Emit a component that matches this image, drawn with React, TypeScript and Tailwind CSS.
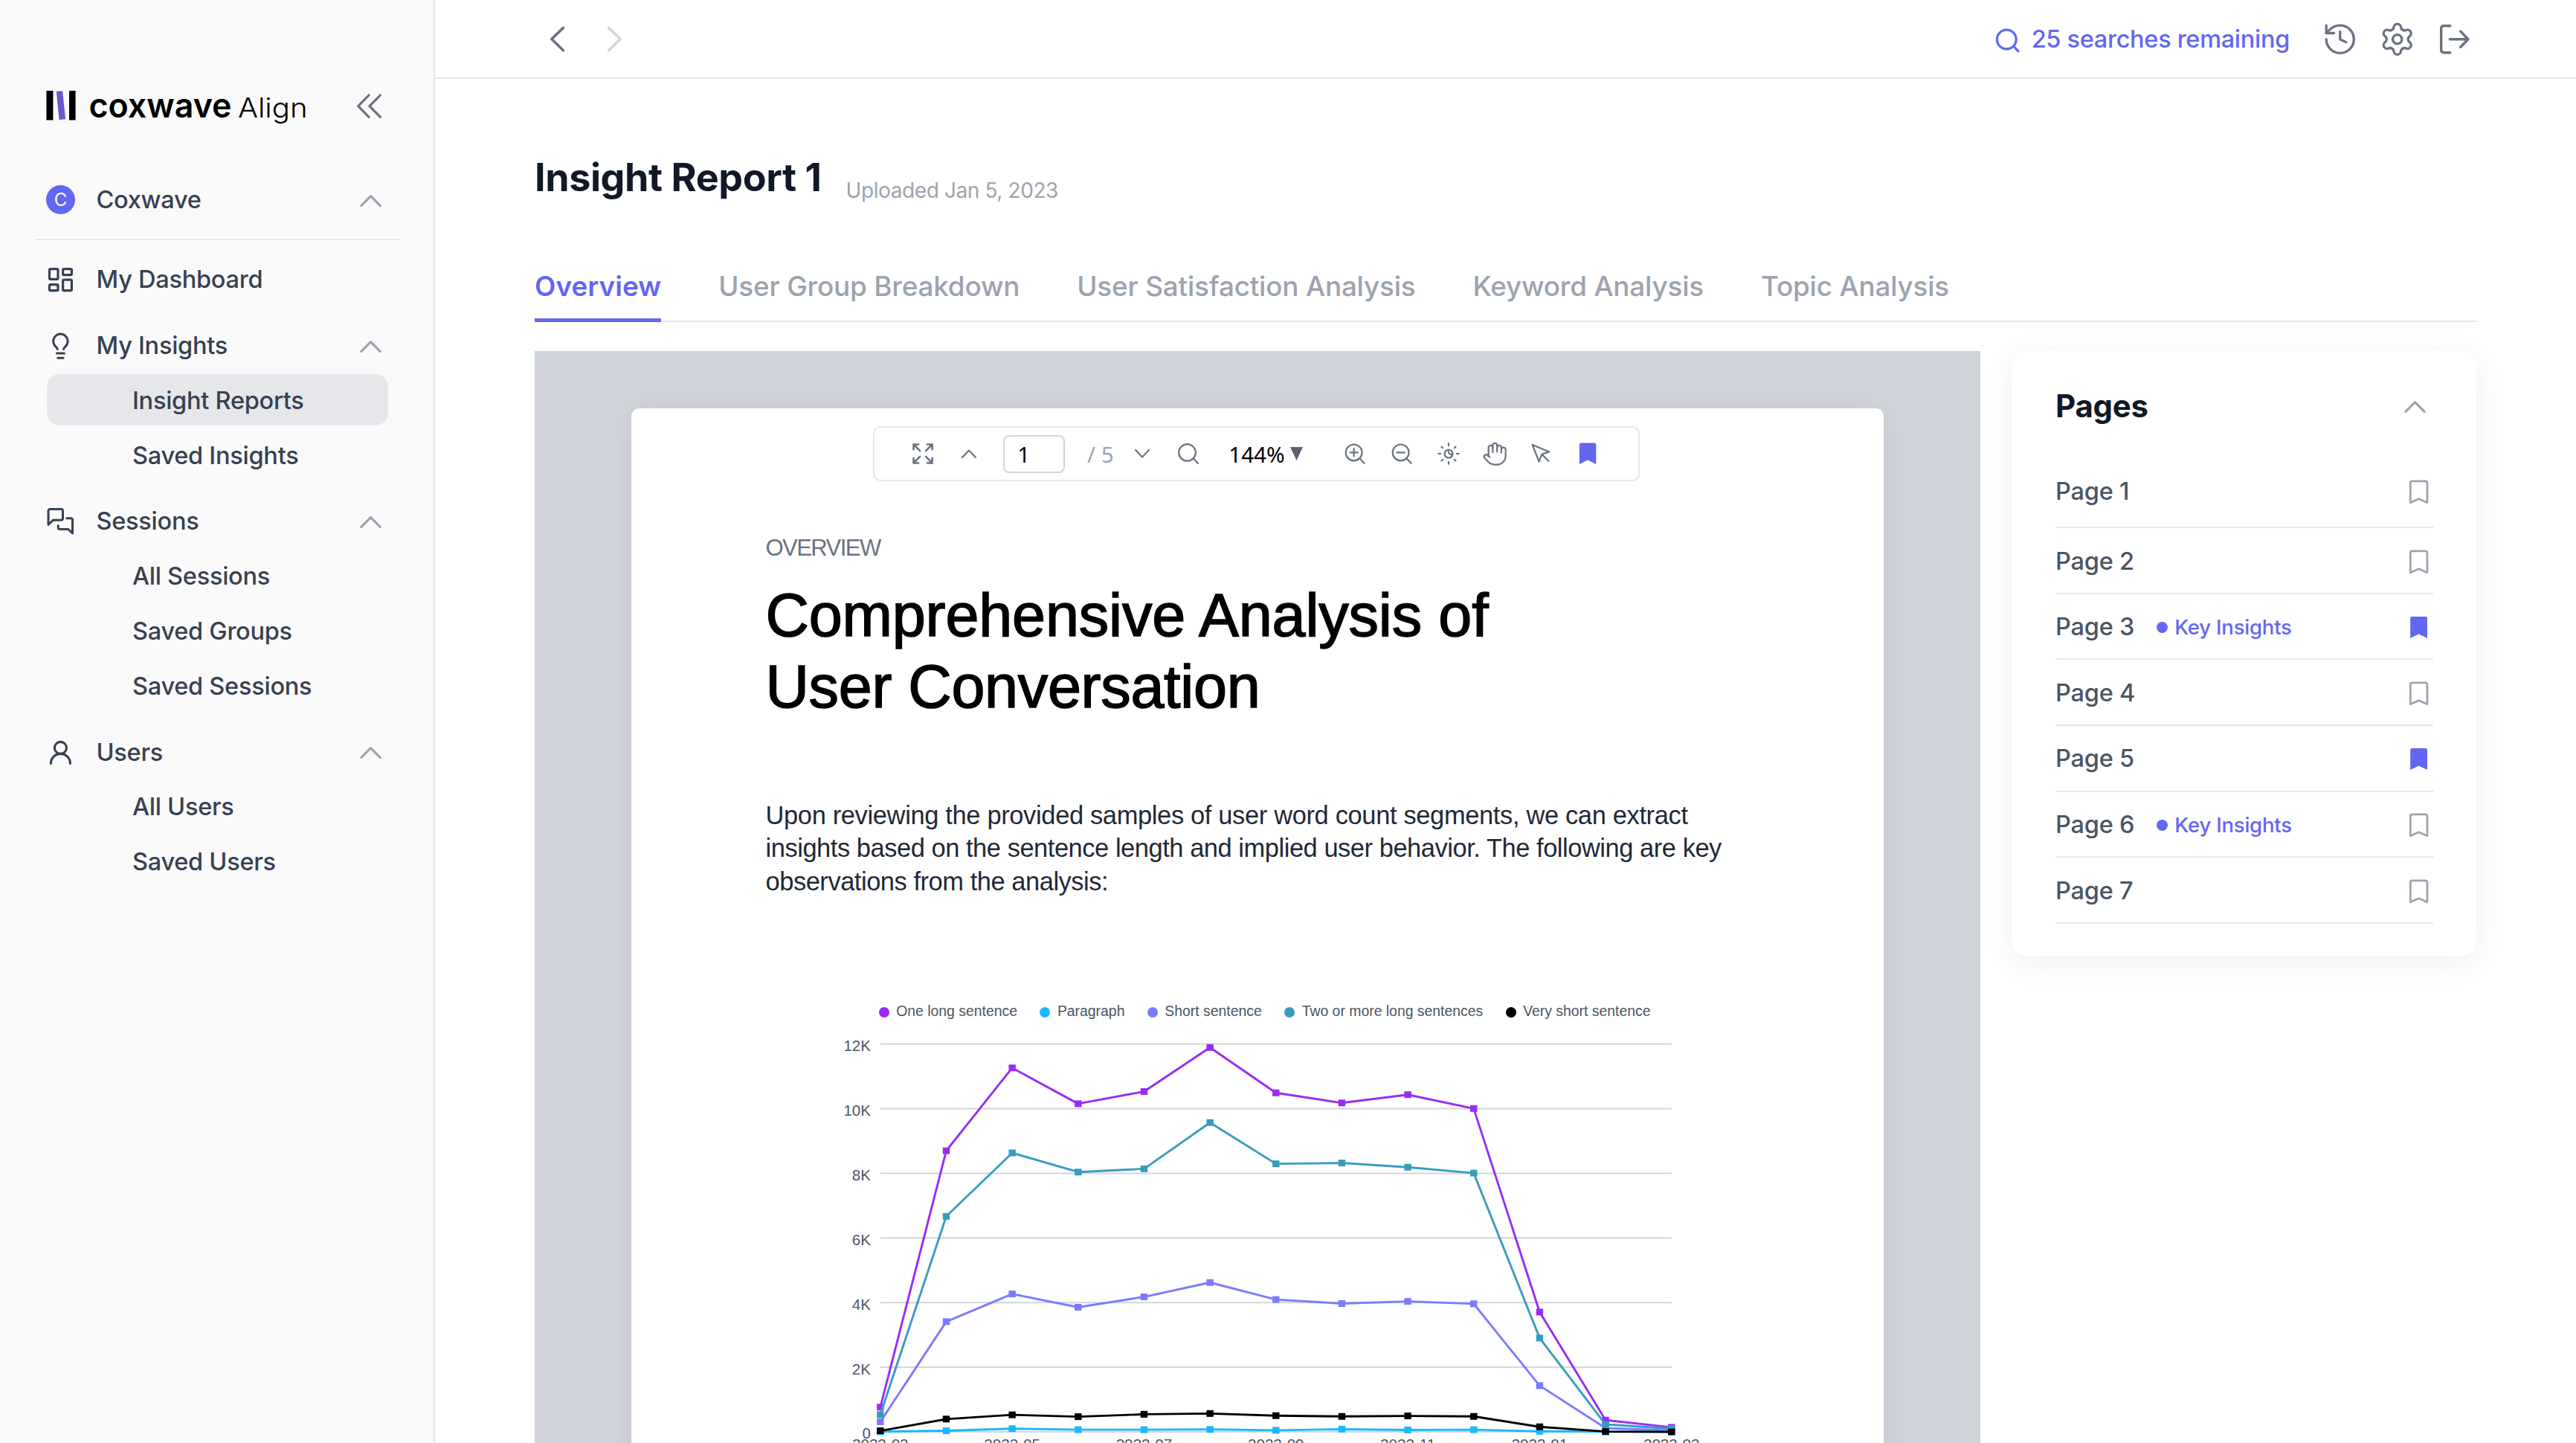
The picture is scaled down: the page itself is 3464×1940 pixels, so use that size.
import type { ReactNode } from "react";
import { Hand, History, Settings } from "lucide-react";

const sans = "font-['Inter',sans-serif]";
const helvetica = "font-['Liberation_Sans',Arial,sans-serif]";
const noto = "font-['Noto_Sans',sans-serif]";

function Icon({ children, className = "", box = 39, stroke = 3.2 }: { children: ReactNode; className?: string; box?: number; stroke?: number }) {
  return (
    <svg
      width={box}
      height={box}
      viewBox={`0 0 ${box} ${box}`}
      fill="none"
      stroke="currentColor"
      strokeWidth={stroke}
      strokeLinecap="round"
      strokeLinejoin="round"
      className={`shrink-0 ${className}`}
    >
      {children}
    </svg>
  );
}

const ChevronUp = ({ className = "" }: { className?: string }) => (
  <Icon className={`text-[#9ca3af] ${className}`}>
    <path d="M6.9 26.4 19.5 13.6l12.6 12.8" />
  </Icon>
);

const DashboardIcon = () => (
  <Icon>
    <rect x="4.5" y="5.6" width="11.5" height="13.8" rx="1.6" />
    <rect x="22.6" y="5.6" width="11.8" height="8" rx="1.6" />
    <rect x="4.5" y="26.6" width="11.5" height="8" rx="1.6" />
    <rect x="22.6" y="20.2" width="11.8" height="14.4" rx="1.6" />
  </Icon>
);

const BulbIcon = () => (
  <Icon stroke={3}>
    <path d="M15.3 24.4c0-1.6-1.2-2.2-2.6-3.6a9.7 9.7 0 1 1 13.4 0c-1.4 1.4-2.6 2-2.6 3.6" />
    <path d="M14.3 29.9h10.2M15.8 36.2h7.2" />
  </Icon>
);

const ChatIcon = () => (
  <Icon stroke={3}>
    <path d="M3 24.5V6a2.4 2.4 0 0 1 2.4-2.4h14.7A2.4 2.4 0 0 1 22.5 6v9.8a2.4 2.4 0 0 1-2.4 2.4H9.6z" />
    <path d="M27.8 15.8h5.3a2.4 2.4 0 0 1 2.4 2.4V36l-6-5.6H18.6a2.4 2.4 0 0 1-2.4-2.4v-2.6" />
  </Icon>
);

const UserIcon = () => (
  <Icon stroke={3.1}>
    <circle cx="19.4" cy="14.4" r="8" />
    <path d="M6.4 35.4a13 13 0 0 1 26 0" />
  </Icon>
);

function NavHeader({ icon, label, open = true, className = "" }: { icon: ReactNode; label: string; open?: boolean; className?: string }) {
  return (
    <div className={`flex h-[69px] shrink-0 items-center pr-[65px] pl-[62px] ${className}`}>
      {icon}
      <span className="mt-[2px] ml-[28.5px] flex-1">{label}</span>
      {open && <ChevronUp className="mt-[2px]" />}
    </div>
  );
}

function NavItem({ label, active = false }: { label: string; active?: boolean }) {
  return (
    <div className={`mt-[4.9px] mr-[61px] ml-[63px] flex h-[69px] shrink-0 items-center rounded-[17px] pl-[115px] ${active ? "bg-[#e5e7eb]" : ""}`}>
      <span className="mt-[2px]">{label}</span>
    </div>
  );
}

function Logo() {
  return (
    <svg width="356" height="66" viewBox="62 109 356 66" className="overflow-visible">
      <rect x="62.4" y="122" width="9" height="39.5" fill="#000" />
      <path d="M75.8 122.8l8.3-.6 4 38-8.6.8z" fill="#6e56cf" />
      <rect x="93" y="122" width="8.6" height="39.5" fill="#000" />
      <text x="119.5" y="157.6" fontFamily="Inter, sans-serif" fontWeight="600" fontSize="45" letterSpacing="0" textLength="192" lengthAdjust="spacingAndGlyphs">
        coxwave
      </text>
      <text x="320" y="157.6" fontFamily="Inter, sans-serif" fontWeight="300" fontSize="36.5" letterSpacing="0" textLength="93.5" lengthAdjust="spacingAndGlyphs">
        Align
      </text>
    </svg>
  );
}

function Sidebar() {
  return (
    <aside className="flex w-[585px] shrink-0 flex-col border-r-2 border-[#e5e7eb] bg-[#fafafa] text-[32.5px] font-medium tracking-[-0.25px] text-[#374151]">
      <div className="mt-[112px] flex h-[60px] shrink-0 items-center justify-between pr-[67px] pl-[62px]">
        <Logo />
        <Icon className="text-[#6b7280]">
          <path d="M19 5 4.7 19.7 19 34.3M34.4 5 19.9 19.7l14.5 14.6" />
        </Icon>
      </div>
      <NavHeader
        className="mt-[62px]"
        icon={
          <span className="flex size-[39px] items-center justify-center rounded-full bg-[#6366f1] text-[24px] leading-none font-normal tracking-normal text-white">C</span>
        }
        label="Coxwave"
      />
      <div className="mt-[18px] mr-[45px] ml-[47px] h-[2px] shrink-0 bg-[#e5e7eb]" />
      <NavHeader className="mt-[18px]" icon={<DashboardIcon />} label="My Dashboard" open={false} />
      <NavHeader className="mt-[19.6px]" icon={<BulbIcon />} label="My Insights" />
      <NavItem label="Insight Reports" active />
      <NavItem label="Saved Insights" />
      <NavHeader className="mt-[19.6px]" icon={<ChatIcon />} label="Sessions" />
      <NavItem label="All Sessions" />
      <NavItem label="Saved Groups" />
      <NavItem label="Saved Sessions" />
      <NavHeader className="mt-[19.8px]" icon={<UserIcon />} label="Users" />
      <NavItem label="All Users" />
      <NavItem label="Saved Users" />
    </aside>
  );
}

function TopBar() {
  return (
    <header className="flex h-[106px] shrink-0 items-center border-b-2 border-[#e5e7eb] pt-[1px] pr-[138.5px] pl-[145px] text-[#6b7280]">
      <Icon stroke={3.6}>
        <path d="M27.4 4.4 11.8 19.5l15.6 15.2" />
      </Icon>
      <Icon stroke={3.6} className="ml-[37.5px] text-[#d1d5db]">
        <path d="M11.6 4.4 27.2 19.5 11.6 34.7" />
      </Icon>
      <div className="ml-auto flex items-center text-[#6366f1]">
        <Icon className="mt-[1px]">
          <circle cx="18.3" cy="19" r="12.9" />
          <path d="m27.6 28.2 6.4 6.6" />
        </Icon>
        <span className="mt-[1px] ml-[13px] text-[32.5px] font-medium tracking-[-0.3px]">25 searches remaining</span>
      </div>
      <History size={49.5} strokeWidth={1.6} className="ml-[43px]" />
      <Settings size={49.5} strokeWidth={1.6} className="ml-[27.5px]" />
      <Icon box={50} stroke={3.4} className="ml-[27px]">
        <path d="M18.8 6.7H10a3.3 3.3 0 0 0-3.3 3.3v29.4a3.3 3.3 0 0 0 3.3 3.3h8.8M18.4 24.7h24.4M32.8 14.2 43 24.7 32.8 35.2" />
      </Icon>
    </header>
  );
}

const tabs = ["Overview", "User Group Breakdown", "User Satisfaction Analysis", "Keyword Analysis", "Topic Analysis"];

function Tabs() {
  return (
    <nav className="mt-[66px] flex h-[96px] gap-[77px] border-b-2 border-[#e5e7eb] text-[36.8px]">
      {tabs.map((tab, i) => (
        <div
          key={tab}
          className={`-mb-[2px] flex h-[96px] items-center border-b-[5px] pt-[4px] ${
            i === 0 ? "border-[#6366f1] font-semibold tracking-[0.1px] text-[#6366f1]" : "border-transparent font-medium tracking-[-0.15px] text-[#9ca3af]"
          }`}
        >
          {tab}
        </div>
      ))}
    </nav>
  );
}

function Toolbar() {
  return (
    <div className={`ml-[325px] flex h-[74px] w-[1031px] items-center rounded-[10px] border-2 border-[#e5e7eb] pl-[48.5px] text-[29.6px] text-[#6b7280] ${noto}`}>
      <Icon box={32} stroke={2.6}>
        <path d="M3.5 10.2V3.5h6.7M3.5 3.5l8.6 8.6M21.9 3.5h6.7v6.7M28.6 3.5 20 12.1M3.5 21.8v6.7h6.7M3.5 28.5l8.6-8.6M28.6 21.8v6.7h-6.7M28.6 28.5 20 19.9" />
      </Icon>
      <Icon box={32} stroke={2.2} className="ml-[30.8px]">
        <path d="M7 21l9-9.4 9 9.4" />
      </Icon>
      <div className="mt-[1px] ml-[30px] flex h-[51px] w-[83px] items-center rounded-[8px] border-2 border-[#d1d5db] pt-[1px] pl-[17px] text-black">1</div>
      <span className="mt-[2px] ml-[29.7px] text-[#9ca3af]">/ 5</span>
      <Icon box={32} stroke={2.2} className="ml-[22px]">
        <path d="M7 11l9 9.4 9-9.4" />
      </Icon>
      <Icon box={32} stroke={2.2} className="ml-[30.6px]">
        <circle cx="14.5" cy="14.4" r="11.3" />
        <path d="m23 22.6 6 6.4" />
      </Icon>
      <span className="mt-[2px] ml-[38px] text-black">144%</span>
      <svg width="17" height="18" viewBox="0 0 17 18" className="ml-[7.7px] shrink-0">
        <path d="M0 0h17L8.5 18z" fill="#5b626e" />
      </svg>
      <Icon box={32} stroke={2.2} className="ml-[54px]">
        <circle cx="14.6" cy="14.4" r="10.9" />
        <path d="m22.6 22.4 6 6.4M9.4 14.4h10.4M14.6 9.2v10.4" />
      </Icon>
      <Icon box={32} stroke={2.2} className="ml-[30.7px]">
        <circle cx="14.6" cy="14.4" r="10.9" />
        <path d="m22.6 22.4 6 6.4M9.4 14.4h10.4" />
      </Icon>
      <Icon box={32} stroke={2.2} className="ml-[30.6px]">
        <circle cx="16" cy="16" r="5.5" />
        <path d="M15.6 12a4.4 4.4 0 0 0 4.8 5M16 2.2v3M16 26.8v3M2.2 16h3M26.8 16h3M6.6 6.6l1.6 1.6M23.8 23.8l1.6 1.6M25.4 6.6l-1.6 1.6M8.2 23.8l-1.6 1.6" />
      </Icon>
      <Hand size={34.5} strokeWidth={1.5} className="-mr-[1.25px] ml-[29.5px] shrink-0" />
      <Icon box={32} stroke={2.2} className="ml-[30px]">
        <path d="M4.6 4 27.3 13.4 17.4 16.8 13.6 26.6zM17.6 17l8.8 8.8" />
      </Icon>
      <svg width="32" height="32" viewBox="0 0 32 32" className="ml-[31px] shrink-0 fill-[#6366f1]">
        <path d="M4.8 30V4a2.5 2.5 0 0 1 2.5-2.5h17.5A2.5 2.5 0 0 1 27.3 4v26L16 24.4z" />
      </svg>
    </div>
  );
}

const series = [
  { name: "One long sentence", color: "#972df5", values: [764, 8697, 11262, 10152, 10530, 11893, 10489, 10177, 10432, 10004, 3707, 362, 140] },
  { name: "Paragraph", color: "#1ab8ff", values: [5, 33, 99, 66, 66, 74, 49, 82, 58, 66, 16, 3, 2] },
  { name: "Short sentence", color: "#7b7bff", values: [312, 3411, 4266, 3855, 4176, 4620, 4094, 3970, 4036, 3962, 1430, 115, 41] },
  { name: "Two or more long sentences", color: "#379dbf", values: [534, 6667, 8631, 8039, 8138, 9568, 8294, 8319, 8187, 8007, 2902, 230, 99] },
  { name: "Very short sentence", color: "#000000", values: [33, 395, 526, 469, 543, 567, 501, 477, 493, 477, 156, 8, 0] },
];
const drawOrder = [0, 2, 3, 1, 4];
const months = ["2022-03", "2022-05", "2022-07", "2022-09", "2022-11", "2023-01", "2023-03"];

const px = (i: number) => 153.8 + i * 88.66;
const py = (value: number) => 545 - (value / 2000) * 86.9;

function Chart() {
  return (
    <div className={`text-[19.4px] text-[#4b5563] ${helvetica}`}>
      <div className="mt-[138.5px] ml-[152.2px] flex h-[30px] items-center gap-[30.4px] whitespace-nowrap">
        {series.map((s) => (
          <div key={s.name} className="flex items-center gap-[9.5px]">
            <span className="size-[14px] rounded-full" style={{ backgroundColor: s.color }} />
            <span className="-mt-[4px]">{s.name}</span>
          </div>
        ))}
      </div>
      <svg width="1300" height="590" viewBox="0 0 1300 590" className="mt-[4.3px]">
        {[0, 2, 4, 6, 8, 10, 12].map((k) => (
          <g key={k}>
            <line x1={154} x2={1217.7} y1={py(k * 1000)} y2={py(k * 1000)} stroke="#d1d5db" strokeWidth="2" />
            <text x={140.8} y={py(k * 1000) + (k === 0 ? 8.5 : 9.8)} textAnchor="end" fontSize="20.4" fill="#4b5563">
              {k === 0 ? "0" : `${k}K`}
            </text>
          </g>
        ))}
        {months.map((m, i) => (
          <text key={m} x={px(i * 2)} y={568.5} textAnchor="middle" fontSize="20.6" fill="#4b5563">
            {m}
          </text>
        ))}
        {drawOrder.map((n) => {
          const s = series[n];
          return (
            <g key={s.name}>
              <polyline points={s.values.map((v, i) => `${px(i)},${py(v)}`).join(" ")} fill="none" stroke={s.color} strokeWidth="2.9" strokeLinejoin="round" />
              {s.values.map((v, i) => (
                <rect key={i} x={px(i) - 4.7} y={py(v) - 4.5} width="9.4" height="9" fill={s.color} />
              ))}
            </g>
          );
        })}
      </svg>
    </div>
  );
}

function Viewer() {
  return (
    <section className="w-[1944px] shrink-0 overflow-hidden bg-[#d1d5db] px-[130px] pt-[77px]">
      <div className="h-[1600px] w-[1684px] rounded-[10px] bg-white pt-[24px] shadow-[0_2px_44px_rgba(0,0,0,0.07)]">
        <Toolbar />
        <div className={`pl-[180.5px] whitespace-nowrap ${helvetica}`}>
          <div className="mt-[70px] text-[31px] leading-[40px] tracking-[-1.55px] text-[#6b7280]">OVERVIEW</div>
          <h2 className="mt-[22px] text-[80.8px] leading-[96px] tracking-[-0.1px] text-black [-webkit-text-stroke:1.6px_black]">
            Comprehensive Analysis of
            <br />
            <span className="tracking-[-0.25px]">User Conversation</span>
          </h2>
          <p className="mt-[102.5px] text-[34.4px] leading-[44.7px] tracking-[-0.43px] text-[#1f2937]">
            <span className="tracking-[-0.32px]">Upon reviewing the provided samples of user word count segments, we can extract</span>
            <br />
            insights based on the sentence length and implied user behavior. The following are key
            <br />
            observations from the analysis:
          </p>
          <Chart />
        </div>
      </div>
    </section>
  );
}

const pages = [
  { n: 1, key: false, saved: false },
  { n: 2, key: false, saved: false },
  { n: 3, key: true, saved: true },
  { n: 4, key: false, saved: false },
  { n: 5, key: false, saved: true },
  { n: 6, key: true, saved: false },
  { n: 7, key: false, saved: false },
];

function PagesCard() {
  return (
    <section className="ml-[43px] h-[813px] w-[623.5px] shrink-0 rounded-[18px] bg-white px-[58px] pt-[43.6px] shadow-[0_9px_44px_rgba(17,24,39,0.07)]">
      <div className="flex h-[60px] items-center justify-between">
        <h3 className="text-[42px] font-bold tracking-[-0.3px] text-[#111827]">Pages</h3>
        <ChevronUp className="mt-[2px] mr-[4.6px]" />
      </div>
      <div className="mt-[40.5px] text-[32.5px] font-medium tracking-[-0.2px] text-[#4b5563]">
        {pages.map((p, i) => (
          <div key={p.n} className={`flex items-center border-b-2 border-[#e5e7eb] ${i === 0 ? "h-[94.2px] pb-[4px]" : "h-[88.6px]"}`}>
            <span className="mt-[3px]">Page {p.n}</span>
            {p.key && (
              <span className="mt-[3px] ml-[30px] flex items-center gap-[9.5px] text-[27.5px] text-[#6366f1]">
                <span className="size-[14.5px] rounded-full bg-[#6366f1]" />
                Key Insights
              </span>
            )}
            {p.saved ? (
              <svg width="39" height="39" viewBox="0 0 39 39" className="mt-[2px] ml-auto fill-[#6366f1]">
                <path d="M8.2 34V7a2 2 0 0 1 2-2H29a2 2 0 0 1 2 2v27l-11.4-5.6z" />
              </svg>
            ) : (
              <Icon stroke={2.7} className="mt-[3px] ml-auto text-[#9ca3af]">
                <path d="M8.3 33.8V7.2a2.3 2.3 0 0 1 2.3-2.3h18a2.3 2.3 0 0 1 2.3 2.3v26.6l-11.3-5z" />
              </Icon>
            )}
          </div>
        ))}
      </div>
    </section>
  );
}

export default function App() {
  return (
    <div className={`flex h-[1940px] w-[3464px] overflow-hidden bg-white ${sans}`}>
      <Sidebar />
      <div className="flex min-w-0 flex-1 flex-col">
        <TopBar />
        <main className="flex min-h-0 w-[2744.5px] flex-1 flex-col pl-[134px]">
          <div className="mt-[101px] flex h-[64px] shrink-0 items-start">
            <h1 className="text-[52px] leading-[64px] font-bold tracking-[-0.4px] text-[#111827]">Insight Report 1</h1>
            <span className="mt-[31.7px] ml-[33px] text-[28px] leading-[34px] tracking-[-0.4px] text-[#9ca3af]">Uploaded Jan 5, 2023</span>
          </div>
          <Tabs />
          <div className="mt-[39px] flex min-h-0 flex-1 items-start">
            <div className="flex h-full">
              <Viewer />
            </div>
            <PagesCard />
          </div>
        </main>
      </div>
    </div>
  );
}
